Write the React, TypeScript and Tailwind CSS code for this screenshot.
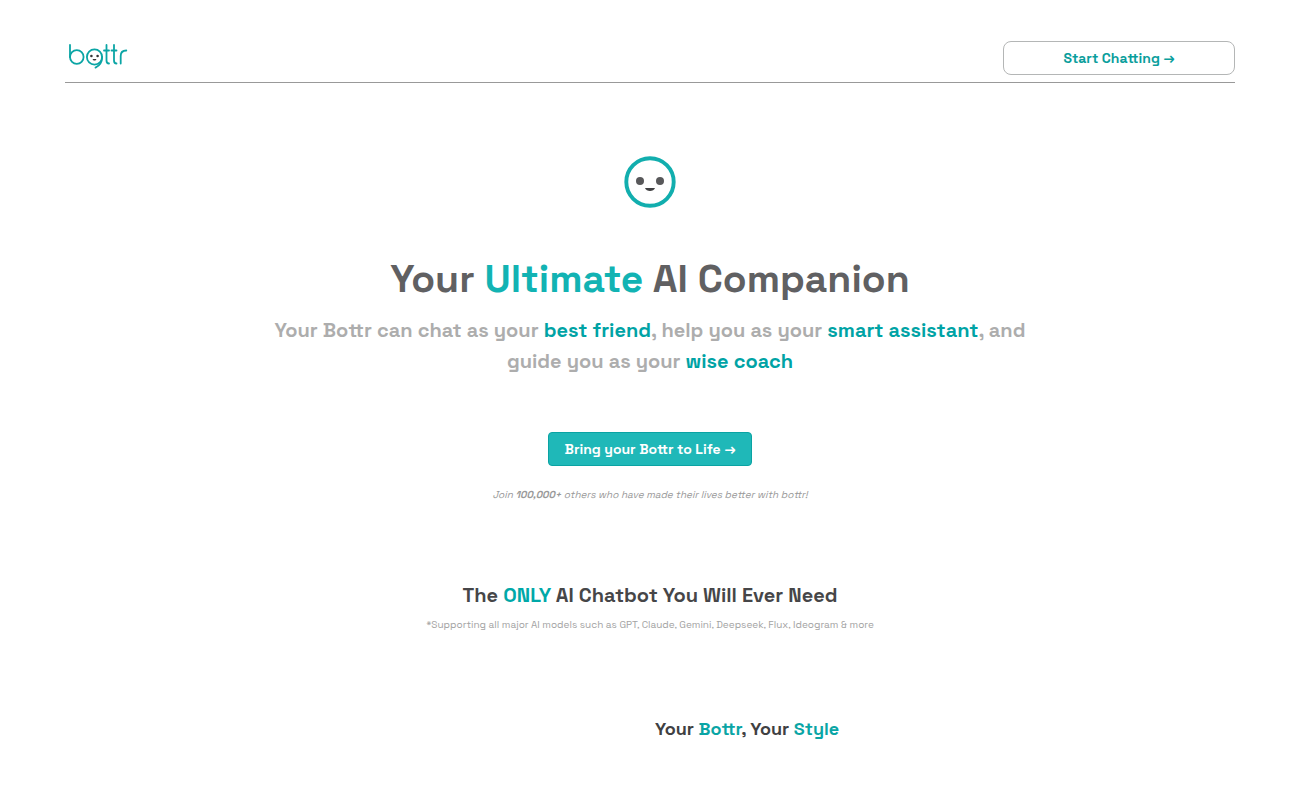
import React from 'react';

const Logo = () => {
  return (
    <svg className="w-15 h-7" viewBox="0 0 60 28" fill="none" stroke="#0ba5a5" strokeWidth="1.8" strokeLinecap="round">
      {/* b */}
      <path d="M2 3V15" />
      <circle cx="8.8" cy="15" r="6.8" />
      {/* o with the face */}
      <circle cx="26.5" cy="15" r="7.6" />
      <path d="M34.1 15c0 5-2.4 8.6-6.6 10.6" />
      <circle cx="23.4" cy="14" r="1.3" fill="#333" stroke="none" />
      <circle cx="29.6" cy="14" r="1.3" fill="#333" stroke="none" />
      <path d="M24.6 17h3.8c-.5 2-3.3 2-3.8 0z" fill="#333" stroke="none" />
      {/* t t r */}
      <path d="M38.5 3v15.5c0 2 .8 3 2.5 3M36 8.5h5" />
      <path d="M46 3v15.5c0 2 .8 3 2.5 3M43.5 8.5h5" />
      <path d="M52.7 21.5V14c0-3.7 1.9-5.5 5.6-5.5" />
    </svg>
  );
};

const Face = () => {
  return (
    <svg className="w-13 h-13" viewBox="0 0 52 52" fill="none">
      <circle cx="26" cy="26" r="23.7" stroke="#12aeae" strokeWidth="3.9" />
      <circle cx="16" cy="25" r="4" fill="#58585a" />
      <circle cx="36" cy="25" r="4" fill="#58585a" />
      <path d="M21 32h10c-1.2 3.9-8.8 3.9-10 0z" fill="#404042" />
    </svg>
  );
};

const App = () => {
  return (
    <div className="min-h-screen bg-white px-[5%] pt-[41px] font-['Space_Grotesk','Inter',sans-serif] font-semibold">
      <header className="flex items-start justify-between border-b border-[#999] pb-[7px]">
        <a href="#" aria-label="bottr" className="mt-px ml-[3px]">
          <Logo />
        </a>
        <button className="w-[232px] h-[34px] rounded-lg border border-[#b4b6b6] text-[14px] text-[#0a9e9c]">
          Start Chatting →
        </button>
      </header>

      <main>
        {/* Hero */}
        <section className="flex flex-col items-center pt-[73px] text-center">
          <Face />
          <h1 className="mt-[46px] text-[39px] leading-[50px] text-[#606062]">
            Your <span className="text-[#12b3b3]">Ultimate</span> AI Companion
          </h1>
          <p className="mt-[11px] max-w-[800px] text-[20px] leading-[31px] text-[#adadad]">
            Your Bottr can chat as your <span className="text-[#00a3a5]">best friend</span>, help you as your{' '}
            <span className="text-[#00a3a5]">smart assistant</span>, and guide you as your{' '}
            <span className="text-[#00a3a5]">wise coach</span>
          </p>
          <button className="mt-[55px] h-[34px] px-4 rounded border border-[#0aa3a3] bg-[#1fb8b8] text-[14px] text-white">
            Bring your Bottr to Life →
          </button>
          <p className="mt-[21px] text-[10px] leading-4 font-normal italic text-[#999]">
            Join <strong className="font-semibold">100,000+</strong> others who have made their lives better with bottr!
          </p>
        </section>

        {/* Models */}
        <section className="mt-[78px] text-center">
          <h2 className="text-[20px] leading-7 text-[#464648]">
            The <span className="text-[#00a8a8]">ONLY</span> AI Chatbot You Will Ever Need
          </h2>
          <p className="mt-2 text-[10px] leading-4 font-normal text-[#a3a3a3]">
            *Supporting all major AI models such as GPT, Claude, Gemini, Deepseek, Flux, Ideogram &amp; more
          </p>
        </section>

        {/* Style */}
        <section className="mt-[84px] grid grid-cols-2 gap-[10px] pb-12">
          <h3 className="col-start-2 text-[18px] leading-6 text-[#404042]">
            Your <span className="text-[#0aa5a5]">Bottr</span>, Your <span className="text-[#0aa5a5]">Style</span>
          </h3>
        </section>
      </main>
    </div>
  );
};

export default App;
